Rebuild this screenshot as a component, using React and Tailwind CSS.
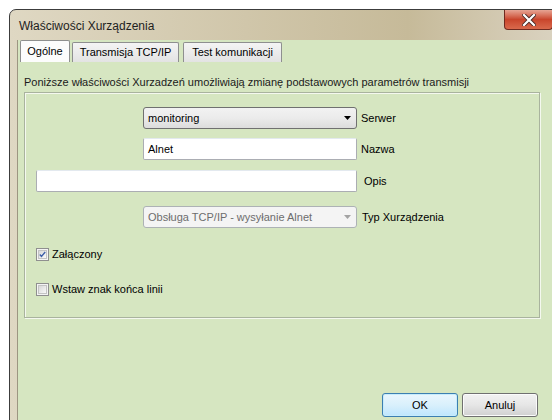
import React from 'react';

const Arrow = ({ color = '#000' }) => (
  <svg width="7" height="4" viewBox="0 0 7 4">
    <path d="M0 0h7L3.5 4z" fill={color} />
  </svg>
);

const Checkbox = ({ checked }) => (
  <div className="w-[13px] h-[13px] border border-[#8f8f8f] bg-[#f4f4f4] p-[1px] shrink-0">
    <div className="w-full h-full border border-[#c4c4c4] bg-gradient-to-br from-[#d8d8d8] to-[#f9f9f9] flex items-center justify-center">
      {checked && (
        <svg width="9" height="9" viewBox="0 0 9 9">
          <path d="M1 4.5l2.2 2.4L8 1.2" stroke="#3d5fa8" strokeWidth="1.8" fill="none" />
        </svg>
      )}
    </div>
  </div>
);

const Tab = ({ label, active, className = '' }) => (
  <div
    className={`border border-[#8e8f8f] border-b-0 rounded-t-[2px] flex items-center justify-center ${
      active
        ? 'h-[22px] bg-[#fcfcfc] z-10'
        : 'h-[20px] bg-gradient-to-b from-[#f4f4f4] to-[#e3e3e3]'
    } ${className}`}
  >
    {label}
  </div>
);

export default function App() {
  return (
    <div className="w-[552px] h-[420px] overflow-hidden bg-white font-['Liberation_Sans',Arial,sans-serif] text-[11px] text-black leading-none">
      {/* window frame */}
      <div className="ml-[9px] mt-[9px] w-[570px] h-[430px] rounded-tl-[7px] border border-[#3c3c3c] bg-gradient-to-r from-[#dfd8c3] via-[#c6ba99] via-70% to-[#ddd6c6] flex flex-col">
        {/* title bar */}
        <div className="h-[30px] flex items-start shrink-0">
          <span className="pl-[9px] pt-[10px] text-[12px] text-[#1e1e1e]">Właściwości Xurządzenia</span>
          <div className="ml-[auto] mr-[25px] w-[49px] h-[20px] rounded-b-[4px] border border-t-0 border-[#6f2a20] bg-gradient-to-b from-[#e6a494] via-[#c9452c] to-[#d9694c] flex items-center justify-center">
            <svg width="14" height="12" viewBox="0 0 14 12">
              <path d="M2 1l10 10M12 1L2 11" stroke="#4a2a26" strokeWidth="4" strokeLinecap="square" />
              <path d="M2 1l10 10M12 1L2 11" stroke="#ffffff" strokeWidth="2.2" strokeLinecap="square" />
            </svg>
          </div>
        </div>

        {/* client area */}
        <div className="flex-1 ml-[7px] border-l border-[#9d9682] bg-[#d6e6c1] flex flex-col">
          {/* tabs */}
          <div className="flex items-end pl-[2px] h-[22px]">
            <Tab label="Ogólne" active className="w-[50px]" />
            <Tab label="Transmisja TCP/IP" className="w-[107px] ml-[2px]" />
            <Tab label="Test komunikacji" className="w-[99px] ml-[4px]" />
          </div>

          <div className="pl-[6px] pt-[15px] text-[#1a1a1a]">
            Poniższe właściwości Xurzadzeń umożliwiają zmianę podstawowych parametrów transmisji
          </div>

          {/* group box */}
          <div className="ml-[6px] mt-[4px] w-[516px] h-[226px] border border-[#a9b39e] shadow-[inset_1px_1px_0_#f4f8ef,1px_1px_0_#f4f8ef] flex flex-col">
            <div className="flex items-center mt-[14px] ml-[118px]">
              <div className="w-[214px] h-[22px] rounded-[3px] border border-[#707070] bg-gradient-to-b from-[#f2f2f2] via-[#ebebeb] to-[#dcdcdc] flex items-center pl-[4px] pr-[5px]">
                <span className="flex-1">monitoring</span>
                <Arrow />
              </div>
              <span className="ml-[4px]">Serwer</span>
            </div>

            <div className="flex items-center mt-[9px] ml-[118px]">
              <div className="w-[214px] h-[22px] rounded-[2px] border border-[#abadb3] border-t-[#e3e9ef] bg-white flex items-center pl-[4px]">
                Alnet
              </div>
              <span className="ml-[4px]">Nazwa</span>
            </div>

            <div className="flex items-center mt-[10px] ml-[11px]">
              <div className="w-[321px] h-[22px] rounded-[2px] border border-[#abadb3] border-t-[#e3e9ef] bg-white" />
              <span className="ml-[7px]">Opis</span>
            </div>

            <div className="flex items-center mt-[14px] ml-[118px]">
              <div className="w-[214px] h-[22px] rounded-[3px] border border-[#adb2b5] bg-[#f4f4f4] text-[#6d6d6d] flex items-center pl-[4px] pr-[5px]">
                <span className="flex-1">Obsługa TCP/IP - wysyłanie Alnet</span>
                <Arrow color="#a3a3a3" />
              </div>
              <span className="ml-[5px]">Typ Xurządzenia</span>
            </div>

            <div className="flex items-center mt-[20px] ml-[11px]">
              <Checkbox checked />
              <span className="ml-[3px]">Załączony</span>
            </div>

            <div className="flex items-center mt-[22px] ml-[11px]">
              <Checkbox />
              <span className="ml-[3px]">Wstaw znak końca linii</span>
            </div>
          </div>

          {/* dialog buttons */}
          <div className="ml-[6px] w-[516px] mt-[75px] flex justify-end gap-[4px] pr-[2px]">
            <div className="w-[76px] h-[24px] rounded-[3px] border border-[#3c7fb1] shadow-[inset_0_0_0_1px_#c7ecfb] bg-gradient-to-b from-[#eaf6fd] via-[#d9f0fc] to-[#bee6fd] flex items-center justify-center">
              OK
            </div>
            <div className="w-[76px] h-[24px] rounded-[3px] border border-[#707070] shadow-[inset_0_0_0_1px_#fbfbfb] bg-gradient-to-b from-[#f2f2f2] via-[#e6e6e6] to-[#d0d0d0] flex items-center justify-center">
              Anuluj
            </div>
          </div>
        </div>
      </div>
    </div>
  );
}
